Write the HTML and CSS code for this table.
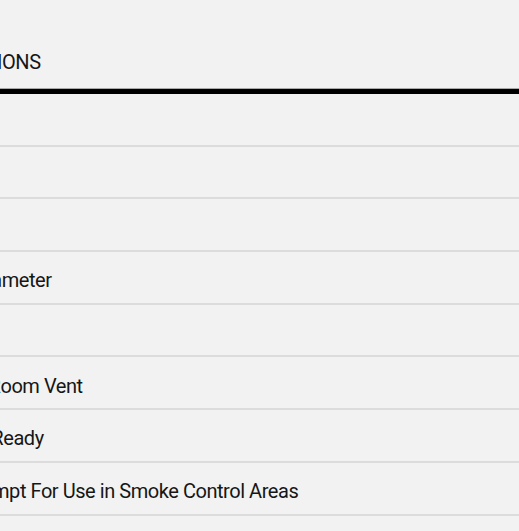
FILE: index.html
```html
<!DOCTYPE html>
<html lang="en">
<head>
<meta charset="utf-8">
<title>Specifications</title>
<link rel="stylesheet" href="styles.css">
</head>
<body>
<section class="spec">
  <div class="spec-inner">
    <h2 class="spec-title">SPECIFICATIONS</h2>
    <div class="spec-rule"></div>
    <ul class="spec-list">
      <li class="spec-row"><span class="spec-label">Height</span></li>
      <li class="spec-row"><span class="spec-label">Width</span></li>
      <li class="spec-row"><span class="spec-label">Depth</span></li>
      <li class="spec-row"><span class="spec-label">Flue Exit Diameter</span></li>
      <li class="spec-row"><span class="spec-label">Fuel Type</span></li>
      <li class="spec-row"><span class="spec-label">Additional Room Vent</span></li>
      <li class="spec-row"><span class="spec-label">Ecodesign Ready</span></li>
      <li class="spec-row"><span class="spec-label">DEFRA Exempt For Use in Smoke Control Areas</span></li>
      <li class="spec-row"><span class="spec-label">Warranty</span></li>
    </ul>
  </div>
</section>
</body>
</html>
```
FILE: styles.css
```css
html, body {
  margin: 0;
  padding: 0;
  background: #f2f2f2;
  overflow: hidden;
}
body {
  font-family: Roboto, "Liberation Sans", sans-serif;
  color: #161616;
}
.spec {
  overflow: hidden;
  width: 519px;
}
.spec-inner {
  margin-left: -106px;
  width: 720px;
}
.spec-title {
  margin: 0;
  padding: 51.5px 0 16.5px;
  font-size: 20px;
  line-height: 20px;
  font-weight: 400;
  letter-spacing: -0.45px;
}
.spec-rule {
  height: 5px;
  background: #000;
  border-top: 1px solid #a9a9a9;
}
.spec-list {
  list-style: none;
  margin: 0;
  padding: 0;
}
.spec-row {
  padding: 18.1px 0 12.6px 4.5px;
  border-bottom: 2px solid #dcdcdc;
  font-size: 20px;
  line-height: 20px;
  letter-spacing: -0.45px;
  white-space: nowrap;
}
```
